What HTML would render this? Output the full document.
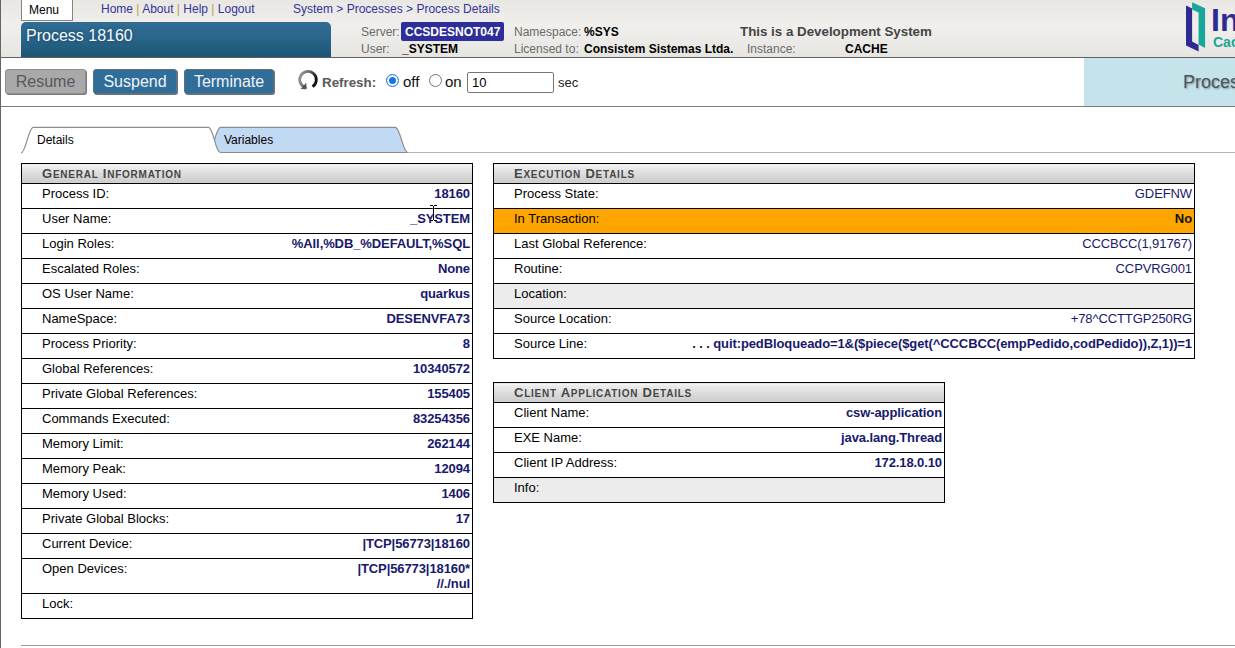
<!DOCTYPE html>
<html><head><meta charset="utf-8">
<style>
*{box-sizing:border-box;}
html,body{margin:0;padding:0;background:#fff;width:1235px;height:648px;overflow:hidden;position:relative;font-family:"Liberation Sans",sans-serif;}
.abs{position:absolute;white-space:nowrap;}
#lborder{position:absolute;left:0;top:0;width:1px;height:648px;background:#646464;z-index:5;}
#hdr{position:absolute;left:0;top:0;width:1235px;height:58px;background:linear-gradient(#e8e7e3,#f0efeb 45%,#e6e5e1);border-bottom:1px solid #606060;}
#menu{position:absolute;left:21px;top:-2px;width:52px;height:23px;background:#fff;border:1px solid #858585;font-size:12px;color:#000;}
#menu span{position:absolute;left:7px;top:4px;}
.lnk{font-size:12px;color:#333399;}
.sep{color:#b8a040;}
#title{position:absolute;left:21px;top:22px;width:310px;height:35px;border-radius:5px 5px 0 0;background:linear-gradient(#326c92,#2a658b 45%,#1a5673);}
#title span{position:absolute;left:5px;top:5px;font-size:16px;color:#f6fcff;text-shadow:0 0 3px rgba(10,40,70,.55);}
.lbl{font-size:12px;color:#6b6b6b;}
.val{font-size:12px;color:#000;font-weight:bold;}
#srv{position:absolute;left:401px;top:22px;width:103px;height:19px;background:#2e2e9a;border-radius:2px;}
#srv span{position:absolute;left:4px;top:3px;font-size:12px;font-weight:bold;color:#fff;}
#toolbar{position:absolute;left:0;top:58px;width:1235px;height:49px;background:#fff;border-bottom:1px solid #7c7c7c;}
.btn{position:absolute;top:11px;height:25px;border-radius:3px;font-size:16px;text-align:center;line-height:24px;}
.btn.dis{background:#a9a9a9;color:#555a60;border:1px solid #8d8d8d;box-shadow:1px 1px 0 #7a7a7a;}
.btn.act{background:#316d99;color:#eef4fa;border:1px solid #5c7080;box-shadow:1px 1px 0 #6a7480;}
#panel{position:absolute;left:1084px;top:0;width:151px;height:48px;background:#c5e3ea;}
#panel span{position:absolute;white-space:nowrap;left:99px;top:14px;font-size:18px;color:#4a5662;text-shadow:1px 1px 2px rgba(0,0,0,.35);}
table.dt{position:absolute;border-collapse:collapse;border:1px solid #000;font-size:13px;}
table.dt td{border-top:1px solid #000;padding:0;height:25px;vertical-align:top;line-height:15px;}
table.dt td.l{padding:2px 0 0 20px;color:#000;}
table.dt td.v{padding:2px 2px 0 0;text-align:right;font-weight:bold;color:#18186e;letter-spacing:-0.1px;}
table.dt th{height:19px;padding:0 0 0 20px;text-align:left;font-size:13px;font-weight:bold;letter-spacing:0.75px;color:#474747;background:linear-gradient(#fafafa,#ececec 10%,#d8d8d8 60%,#cdcdcd 92%,#e0e0e0);line-height:19px;}
table.dt th .sm{font-size:10px;line-height:10px;}
tr.gray td{background:#ececec;}
tr.orange td{background:#ffa500;}
</style></head>
<body>
<div id="hdr">
  <div id="menu"><span>Menu</span></div>
  <div class="abs lnk" style="left:101px;top:2px;">Home <span class="sep">|</span> About <span class="sep">|</span> Help <span class="sep">|</span> Logout</div>
  <div class="abs lnk" style="left:293px;top:2px;">System &gt; Processes &gt; Process Details</div>
  <div id="title"><span>Process 18160</span></div>
  <div class="abs lbl" style="left:361px;top:25px;">Server:</div>
  <div id="srv"><span>CCSDESNOT047</span></div>
  <div class="abs lbl" style="left:361px;top:42px;">User:</div>
  <div class="abs val" style="left:402px;top:42px;">_SYSTEM</div>
  <div class="abs lbl" style="left:514px;top:25px;">Namespace:</div>
  <div class="abs val" style="left:584px;top:25px;">%SYS</div>
  <div class="abs lbl" style="left:514px;top:42px;">Licensed to:</div>
  <div class="abs val" style="left:584px;top:42px;">Consistem Sistemas Ltda.</div>
  <div class="abs" style="left:740px;top:24px;font-size:13.33px;font-weight:bold;color:#454545;">This is a Development System</div>
  <div class="abs lbl" style="left:747px;top:42px;">Instance:</div>
  <div class="abs val" style="left:845px;top:42px;">CACHE</div>
  <!-- logo -->
  <svg class="abs" style="left:1180px;top:0" width="60" height="56" viewBox="0 0 60 56">
    <polygon points="6,5.6 12.1,8.6 12.1,41.5 18.6,45 18.6,51.4 6,45.4" fill="#2d2a91"/>
    <polygon points="12.1,2.2 25.1,8.2 25.1,48 18.6,44.6 18.6,12.5 12.1,9.5" fill="#17a79b"/>
  </svg>
  <div class="abs" style="left:1211px;top:2px;font-size:32px;font-weight:bold;color:#2d2a91;">InterSystems</div>
  <div class="abs" style="left:1213px;top:34px;font-size:14px;font-weight:bold;color:#17a79b;">Caché</div>
</div>
<div id="toolbar">
  <div class="btn dis" style="left:5px;width:81px;">Resume</div>
  <div class="btn act" style="left:93px;width:84px;">Suspend</div>
  <div class="btn act" style="left:184px;width:90px;">Terminate</div>
  <svg class="abs" style="left:294px;top:8px" width="28" height="28" viewBox="294 66 28 28">
    <defs><linearGradient id="rg" x1="0" y1="0" x2="1" y2="0.3"><stop offset="0" stop-color="#9a9a9a"/><stop offset="0.55" stop-color="#6a6a6a"/><stop offset="1" stop-color="#111"/></linearGradient></defs>
    <path d="M306.56,87.87 A8.3,8.3 0 1 1 312.52,86.66" fill="none" stroke="url(#rg)" stroke-width="2.8"/>
    <polygon points="306.3,82.6 306.3,89.2 300.6,89" fill="#555"/>
  </svg>
  <div class="abs" style="left:322px;top:17px;font-size:13.33px;font-weight:bold;color:#5a5a5a;">Refresh:</div>
  <div class="abs" style="left:386px;top:16px;width:13px;height:13px;border-radius:50%;background:#fff;border:1px solid #1a73e8;box-shadow:inset 0 0 0 2px #fff, inset 0 0 0 7px #1a73e8;"></div>
  <div class="abs" style="left:403px;top:15px;font-size:15px;color:#111;">off</div>
  <div class="abs" style="left:429px;top:16px;width:13px;height:13px;border-radius:50%;background:#fff;border:1px solid #767676;"></div>
  <div class="abs" style="left:445px;top:15px;font-size:15px;color:#111;">on</div>
  <div class="abs" style="left:467px;top:14px;width:87px;height:21px;border:1px solid #767676;border-radius:2px;background:#fff;"><span style="position:absolute;left:4px;top:2px;font-size:13px;color:#000;">10</span></div>
  <div class="abs" style="left:558px;top:17px;font-size:13px;color:#222;">sec</div>
  <div id="panel"><span>Process Details</span></div>
</div>
<svg class="abs" style="left:0;top:120px" width="1235" height="40" viewBox="0 120 1235 40">
  <path d="M407.8,152.5 L1235,152.5" stroke="#b4b4b4" stroke-width="1.2" fill="none"/>
  <path d="M208.5,152.5 C213.5,152.5 215.5,127.3 220.5,127.3 L395.3,127.3 C400.3,127.3 402.8,152.5 407.8,152.5 Z" fill="#c2d9f3" stroke="none"/>
  <path d="M208.5,152.5 C213.5,152.5 215.5,127.3 220.5,127.3 L395.3,127.3 C400.3,127.3 402.8,152.5 407.8,152.5 L216,152.5" fill="none" stroke="#8c8c8c" stroke-width="1.2"/>
  <path d="M21,152.8 C26,152.8 28.3,127.3 33.3,127.3 L208.5,127.3 C213.5,127.3 215.3,152.5 220.3,152.5 L220.3,154.5 L21,154.5 Z" fill="#fff" stroke="none"/>
  <path d="M21,152.8 C26,152.8 28.3,127.3 33.3,127.3 L208.5,127.3 C213.5,127.3 215.3,152.5 220.3,152.5" fill="none" stroke="#8c8c8c" stroke-width="1.2"/>
</svg>
<div class="abs" style="left:37px;top:133px;font-size:12px;color:#000;">Details</div>
<div class="abs" style="left:224px;top:133px;font-size:12px;color:#000;">Variables</div>
<div class="abs" style="left:21px;top:645px;width:1214px;height:1px;background:#9a9a9a;"></div>
<div id="lborder"></div>
<table class="dt" style="left:21px;top:163px;width:452px;"><tr><th colspan="2">G<span class="sm">ENERAL</span> I<span class="sm">NFORMATION</span></th></tr><tr><td class="l">Process ID:</td><td class="v">18160</td></tr><tr><td class="l">User Name:</td><td class="v">_SYSTEM</td></tr><tr><td class="l">Login Roles:</td><td class="v">%All,%DB_%DEFAULT,%SQL</td></tr><tr><td class="l">Escalated Roles:</td><td class="v">None</td></tr><tr><td class="l">OS User Name:</td><td class="v">quarkus</td></tr><tr><td class="l">NameSpace:</td><td class="v">DESENVFA73</td></tr><tr><td class="l">Process Priority:</td><td class="v">8</td></tr><tr><td class="l">Global References:</td><td class="v">10340572</td></tr><tr><td class="l">Private Global References:</td><td class="v">155405</td></tr><tr><td class="l">Commands Executed:</td><td class="v">83254356</td></tr><tr><td class="l">Memory Limit:</td><td class="v">262144</td></tr><tr><td class="l">Memory Peak:</td><td class="v">12094</td></tr><tr><td class="l">Memory Used:</td><td class="v">1406</td></tr><tr><td class="l">Private Global Blocks:</td><td class="v">17</td></tr><tr><td class="l">Current Device:</td><td class="v">|TCP|56773|18160</td></tr><tr><td class="l" style="height:35px">Open Devices:</td><td class="v" style="height:35px">|TCP|56773|18160*<br>//./nul</td></tr><tr class="gray0"><td class="l">Lock:</td><td class="v"></td></tr></table>
<table class="dt" style="left:493px;top:163px;width:702px;"><tr><th colspan="2">E<span class="sm">XECUTION</span> D<span class="sm">ETAILS</span></th></tr><tr class=""><td class="l">Process State:</td><td class="v" style="font-weight:normal">GDEFNW</td></tr><tr class="orange"><td class="l">In Transaction:</td><td class="v" style="color:#111">No</td></tr><tr class=""><td class="l">Last Global Reference:</td><td class="v" style="font-weight:normal">CCCBCC(1,91767)</td></tr><tr class=""><td class="l">Routine:</td><td class="v" style="font-weight:normal">CCPVRG001</td></tr><tr class="gray"><td class="l">Location:</td><td class="v"></td></tr><tr class=""><td class="l">Source Location:</td><td class="v" style="font-weight:normal">+78^CCTTGP250RG</td></tr><tr class=""><td class="l">Source Line:</td><td class="v"><span style="color:#111">. . . </span>quit:pedBloqueado=1&amp;($piece($get(^CCCBCC(empPedido,codPedido)),Z,1))=1</td></tr></table>
<table class="dt" style="left:493px;top:382px;width:452px;"><tr><th colspan="2">C<span class="sm">LIENT</span> A<span class="sm">PPLICATION</span> D<span class="sm">ETAILS</span></th></tr><tr class=""><td class="l">Client Name:</td><td class="v">csw-application</td></tr><tr class=""><td class="l">EXE Name:</td><td class="v">java.lang.Thread</td></tr><tr class=""><td class="l">Client IP Address:</td><td class="v">172.18.0.10</td></tr><tr class="gray"><td class="l">Info:</td><td class="v"></td></tr></table>
<svg class="abs" style="left:428px;top:203px;z-index:10" width="12" height="20" viewBox="428 203 12 20">
  <path d="M430,205.5 H433 M434,205.5 H437 M433.5,206 V220 M430,220.5 H433 M434,220.5 H437" stroke="#fff" stroke-width="2" fill="none" opacity="0.4"/>
  <path d="M430,205.5 H433 M434,205.5 H437 M433.5,206 V220 M430,220.5 H433 M434,220.5 H437" stroke="#000" stroke-width="1" fill="none"/>
</svg>
</body></html>
